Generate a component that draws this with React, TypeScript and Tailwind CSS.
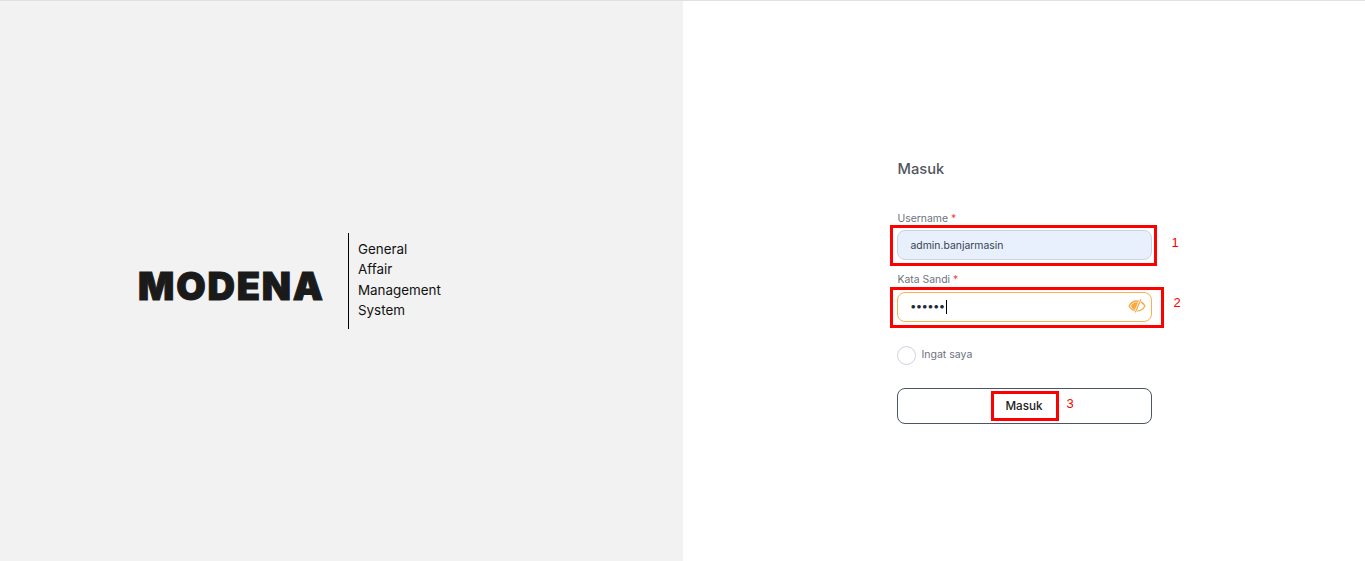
export default function App() {
  return (
    <div className="flex h-[561px] w-full overflow-hidden border-t border-[#e0e0e0] bg-white font-['Inter',sans-serif]">
      <div className="flex h-full w-[683px] shrink-0 items-center bg-[#f2f2f2] pl-[138px]">
        <div className="flex items-center">
          <span className="mt-[10px] w-[210px] text-[38px] leading-none font-black tracking-[1.8px] text-[#1a1a1a] [-webkit-text-stroke:1px_#1a1a1a] [paint-order:stroke]">
            MODENA
          </span>
          <div className="h-[96px] w-px bg-black" />
          <div className="mb-[3px] ml-[9px] w-[100px] text-[13.4px] leading-[20.4px] text-[#111]">
            <div>General</div>
            <div>Affair</div>
            <div>Management</div>
            <div>System</div>
          </div>
        </div>
      </div>

      <div className="flex flex-1 justify-center pt-[158px]">
        <div className="w-[255px]">
          <h1 className="pl-px text-[14.7px] leading-[20px] font-medium text-[#52555c]">Masuk</h1>

          <label className="mt-[33px] block pl-px text-[10.4px] leading-[14px] text-[#6b7280]">
            Username <span className="text-[#ef4444]">*</span>
          </label>
          <div className="relative mt-[4px] flex h-[30px] items-center rounded-[8px] border border-[#ccd3de] bg-[#e8f0fe] pt-[2px] pl-[13px] text-[10.4px] text-[#374151]">
            admin.banjarmasin
            <div className="absolute top-[-6px] left-[-8px] h-[41px] w-[267px] border-[3px] border-[#ff0000]" />
            <span className="absolute top-[3px] left-[274px] text-[13px] leading-[18px] text-[#ff0000] font-['Liberation_Sans',sans-serif]">1</span>
          </div>

          <label className="mt-[13px] block pl-px text-[10.4px] leading-[14px] text-[#6b7280]">
            Kata Sandi <span className="text-[#ef4444]">*</span>
          </label>
          <div className="relative mt-[5px] flex h-[30px] items-center rounded-[8px] border border-[#f9b04e] bg-white pl-[13px] text-[#1f2937]">
            <span className="text-[11.5px] leading-none font-bold tracking-[0.3px]">••••••</span>
            <span className="ml-px h-[14px] w-px bg-black" />
            <svg className="absolute top-[4px] right-[5px]" width="18" height="18" viewBox="0 0 18 18" fill="none">
              <path d="M1 9C3 5.6 5.8 4 9 4s6 1.6 8 5c-2 3.4-4.8 5-8 5S3 12.4 1 9Z" stroke="#f9a942" strokeWidth="1.3" />
              <path d="M2.8 9C4 6.8 6.200 5.300 9 5.300l2 .2L7 13C5 12.500 3.700 10.800 2.800 9Z" fill="#f9a942" />
              <path d="M12.800 2.500 7.500 15" stroke="#ffffff" strokeWidth="2.600" />
              <path d="M12.800 2.500 7.500 15" stroke="#f9a942" strokeWidth="1.200" strokeLinecap="round" />
            </svg>
            <div className="absolute top-[-6px] left-[-8px] h-[41px] w-[274px] border-[3px] border-[#ff0000]" />
            <span className="absolute top-[1px] left-[276px] text-[13px] leading-[18px] text-[#ff0000] font-['Liberation_Sans',sans-serif]">2</span>
          </div>

          <div className="mt-[24px] flex items-center">
            <span className="h-[19px] w-[19px] rounded-full border border-[#ccd3de] bg-white" />
            <span className="mb-[2px] ml-[6px] text-[10.5px] text-[#6b7280]">Ingat saya</span>
          </div>

          <div className="relative mt-[23px] flex h-[36px] items-center justify-center rounded-[8px] border border-[#4b5563] bg-white pt-[2px] text-[11.7px] font-medium text-[#222]">
            Masuk
            <div className="absolute top-[2px] left-[93px] h-[30px] w-[68px] border-[3px] border-[#ff0000]" />
            <span className="absolute top-[6px] left-[169px] text-[13px] leading-[18px] text-[#ff0000] font-['Liberation_Sans',sans-serif]">3</span>
          </div>
        </div>
      </div>
    </div>
  );
}
